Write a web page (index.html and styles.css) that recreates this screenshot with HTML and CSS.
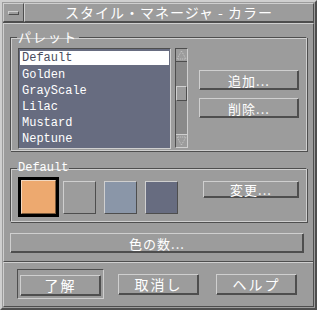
FILE: index.html
```html
<!DOCTYPE html>
<html>
<head>
    <title>スタイル・マネージャ - カラー</title>
    <link rel="stylesheet" href="styles.css">
</head>
<body>
    <div class="window">
        <div class="titlebar">
            <div class="menuBtn"><span class="menuBar"></span></div>
            <div class="titleText">スタイル・マネージャ&nbsp;-&nbsp;カラー</div>
        </div>
        <div class="content">
            <fieldset class="group paletteGroup">
                <legend>パレット</legend>
                <div class="paletteRow">
                    <div class="listWrap">
                        <ul class="paletteList">
                            <li class="selected">Default</li>
                            <li>Golden</li>
                            <li>GrayScale</li>
                            <li>Lilac</li>
                            <li>Mustard</li>
                            <li>Neptune</li>
                        </ul>
                        <div class="scrollbar">
                            <div class="arrow up">
                                <svg width="11" height="10" viewBox="0 0 11 10"><path d="M5.5 1 L1 9 L10 9 Z" fill="none" stroke="#c8c8c8" stroke-width="1" stroke-dasharray="1 1"/></svg>
                            </div>
                            <div class="track">
                                <div class="thumb"></div>
                            </div>
                            <div class="arrow down">
                                <svg width="11" height="10" viewBox="0 0 11 10"><path d="M5.5 9 L1 1 L10 1 Z" fill="none" stroke="#c8c8c8" stroke-width="1" stroke-dasharray="1 1"/></svg>
                            </div>
                        </div>
                    </div>
                    <div class="sideButtons">
                        <button class="btn wide">追加...</button>
                        <button class="btn wide">削除...</button>
                    </div>
                </div>
            </fieldset>

            <fieldset class="group defaultGroup">
                <legend class="mono">Default</legend>
                <div class="swatchRow">
                    <div class="swatchSel"><div class="swatch orange"></div></div>
                    <div class="swatch gray"></div>
                    <div class="swatch blue"></div>
                    <div class="swatch slate"></div>
                    <button class="btn change">変更...</button>
                </div>
            </fieldset>

            <button class="btn colors">色の数...</button>
        </div>
        <div class="footer">
            <div class="defaultFrame"><button class="btn foot">了解</button></div>
            <button class="btn foot cancel">取消し</button>
            <button class="btn foot help">ヘルプ</button>
        </div>
    </div>
</body>
</html>
```
FILE: styles.css
```css
html, body {
    margin: 0;
    padding: 0;
    background-color: #9c9c9c;
}
body {
    width: 317px;
    height: 310px;
    font-family: "Noto Sans CJK JP", "DejaVu Sans", sans-serif;
    color: #ffffff;
}
.window {
    box-sizing: border-box;
    width: 317px;
    height: 310px;
    border: 2px solid;
    border-color: #cfcfcf #4e4e4e #4e4e4e #cfcfcf;
    padding: 1px;
    display: flex;
    flex-direction: column;
}
.titlebar {
    display: flex;
    height: 19px;
    border-bottom: 1px solid #4e4e4e;
}
.menuBtn {
    box-sizing: border-box;
    width: 21px;
    border: 1px solid;
    border-color: #cfcfcf #4e4e4e #4e4e4e #cfcfcf;
    display: flex;
    align-items: center;
    justify-content: center;
}
.menuBar {
    width: 9px;
    height: 2px;
    border: 1px solid;
    border-color: #cfcfcf #4e4e4e #4e4e4e #cfcfcf;
}
.titleText {
    flex: 1;
    box-sizing: border-box;
    border: 1px solid;
    border-color: #cfcfcf #4e4e4e #4e4e4e #cfcfcf;
    text-align: center;
    font-size: 14px;
    line-height: 17px;
    letter-spacing: 1px;
}
.content {
    flex: 1;
    border-top: 1px solid #cfcfcf;
    border-left: 1px solid #cfcfcf;
    border-right: 1px solid #4e4e4e;
    padding: 6px 6px 0 6px;
}
.group {
    margin: 0;
    padding: 0;
    border: 1px solid;
    border-color: #4e4e4e #cfcfcf #cfcfcf #4e4e4e;
    box-shadow: inset 1px 1px 0 #cfcfcf, 1px 1px 0 #4e4e4e;
}
.group legend {
    font-size: 13px;
    line-height: 14px;
    padding: 0 1px;
    margin-left: 6px;
    letter-spacing: 2px;
}
.group legend.mono {
    font-size: 12px;
    letter-spacing: 0;
}
.mono, .paletteList {
    font-family: "Liberation Mono", "DejaVu Sans Mono", monospace;
}
.paletteGroup {
    height: 121px;
    box-sizing: border-box;
}
.paletteRow {
    display: flex;
    padding: 4px 0 0 7px;
}
.listWrap {
    display: flex;
    gap: 4px;
}
.paletteList {
    list-style: none;
    margin: 0;
    padding: 2px 1px 0 1px;
    width: 149px;
    height: 97px;
    background-color: #676c80;
    border: 1px solid;
    border-color: #4e4e4e #cfcfcf #cfcfcf #4e4e4e;
    font-size: 12px;
}
.paletteList li {
    height: 16px;
    line-height: 16px;
    padding-left: 2px;
}
.paletteList .selected {
    background-color: #ffffff;
    color: #4a4e60;
    height: 14px;
    line-height: 14px;
    margin-bottom: 2px;
}
.scrollbar {
    box-sizing: border-box;
    width: 13px;
    height: 100px;
    border: 1px solid;
    border-color: #4e4e4e #cfcfcf #cfcfcf #4e4e4e;
    background-color: #8a8a8a;
    display: flex;
    flex-direction: column;
}
.arrow {
    height: 12px;
    display: flex;
    align-items: center;
    justify-content: center;
    background-color: #9c9c9c;
}
.arrow.up {
    border-bottom: 1px solid #4e4e4e;
}
.arrow.down {
    border-top: 1px solid #cfcfcf;
}
.track {
    flex: 1;
    padding-top: 24px;
}
.thumb {
    box-sizing: border-box;
    height: 15px;
    background-color: #9c9c9c;
    border: 1px solid;
    border-color: #cfcfcf #4e4e4e #4e4e4e #cfcfcf;
}
.sideButtons {
    display: flex;
    flex-direction: column;
    gap: 8px;
    padding: 22px 0 0 11px;
}
.btn {
    box-sizing: border-box;
    background-color: #9c9c9c;
    color: #ffffff;
    font-family: "Noto Sans CJK JP", "DejaVu Sans", sans-serif;
    font-size: 13px;
    border: 1px solid;
    border-color: #cfcfcf #4e4e4e #4e4e4e #cfcfcf;
    box-shadow: inset -1px -1px 0 #4e4e4e;
    padding: 0;
    margin: 0;
    line-height: 17px;
    letter-spacing: 1px;
}
.wide {
    width: 100px;
    height: 20px;
}
.defaultGroup {
    margin-top: 10px;
    height: 61px;
    box-sizing: border-box;
}
.swatchRow {
    display: flex;
    align-items: center;
    padding: 2px 0 0 7px;
}
.swatchSel {
    background-color: #000000;
    padding: 3px;
    margin-right: 4px;
}
.swatch {
    box-sizing: border-box;
    width: 33px;
    height: 33px;
    border: 1px solid;
    border-color: #cfcfcf #4e4e4e #4e4e4e #cfcfcf;
    margin-right: 8px;
}
.swatchSel .swatch {
    width: 35px;
    height: 34px;
    margin: 0;
    border-color: #f2d8c0 #7a5a3c #7a5a3c #f2d8c0;
}
.orange { background-color: #eda96f; }
.gray { background-color: #9c9c9c; }
.blue { background-color: #8a96a8; }
.slate { background-color: #676c80; }
.change {
    width: 96px;
    height: 17px;
    line-height: 14px;
    margin-left: 17px;
    align-self: flex-start;
    margin-top: 4px;
}
.colors {
    display: block;
    width: 294px;
    height: 20px;
    margin-top: 11px;
}
.footer {
    height: 44px;
    border-top: 1px solid #4e4e4e;
    box-shadow: inset 0 1px 0 #cfcfcf;
    border-left: 1px solid #cfcfcf;
    border-right: 1px solid #4e4e4e;
    border-bottom: 1px solid #4e4e4e;
    display: flex;
    align-items: center;
    padding: 0 0 0 13px;
}
.defaultFrame {
    border: 1px solid;
    border-color: #4e4e4e #cfcfcf #cfcfcf #4e4e4e;
    padding: 2px;
}
.foot {
    width: 81px;
    height: 21px;
    font-size: 14px;
    letter-spacing: 2px;
}
.cancel {
    margin-left: 14px;
}
.help {
    margin-left: 17px;
}
```
